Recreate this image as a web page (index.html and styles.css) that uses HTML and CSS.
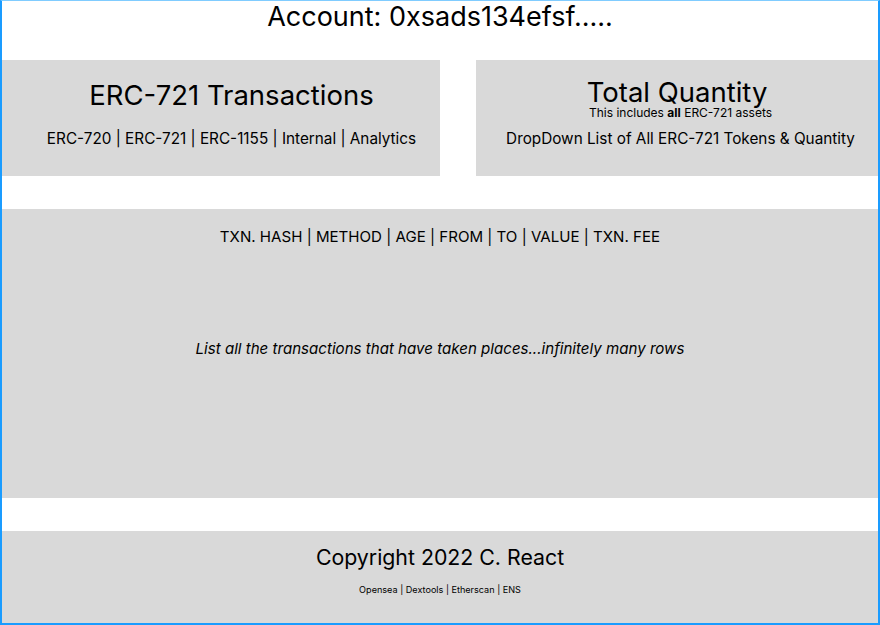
FILE: index.html
```html
<!DOCTYPE html>
<html lang="en">
<head>
<meta charset="utf-8">
<title>Account</title>
<link rel="stylesheet" href="styles.css">
</head>
<body>
<div class="frame">
  <header class="account">Account: 0xsads134efsf.....</header>
  <div class="top-row">
    <section class="card card-left">
      <h1 class="card-title">ERC-721 Transactions</h1>
      <nav class="tabs">ERC-720 | ERC-721 | ERC-1155 | Internal | Analytics</nav>
    </section>
    <section class="card card-right">
      <h2 class="qty-title">Total Quantity</h2>
      <p class="qty-note">This includes <b>all</b> ERC-721 assets</p>
      <p class="qty-list">DropDown List of All ERC-721 Tokens &amp; Quantity</p>
    </section>
  </div>
  <main class="table">
    <div class="table-head">TXN. HASH | METHOD | AGE | FROM | TO | VALUE | TXN. FEE</div>
    <div class="table-body">List all the transactions that have taken places...infinitely many rows</div>
  </main>
  <footer class="footer">
    <div class="copyright">Copyright 2022 C. React</div>
    <div class="links">Opensea | Dextools | Etherscan | ENS</div>
  </footer>
</div>
</body>
</html>
```
FILE: styles.css
```css
* { box-sizing: border-box; margin: 0; padding: 0; }
html, body { background: #fff; }
body {
  font-family: Inter, "Noto Sans", sans-serif;
  color: #000;
}
.frame {
  width: 880px;
  height: 625px;
  border: 2px solid #1a9cff;
  border-top: 1px solid #80ccff;
  display: flex;
  flex-direction: column;
}
.account {
  height: 59px;
  text-align: center;
  font-size: 27px;
  font-weight: 400;
  line-height: 32px;
}
.top-row {
  display: flex;
  gap: 36px;
  height: 116px;
}
.card {
  background: #d9d9d9;
  text-align: center;
}
.card-left {
  width: 438px;
  padding-top: 19px;
  padding-left: 21px;
}
.card-right {
  flex: 1;
  padding-top: 19px;
}
.card-title {
  font-size: 27.5px;
  font-weight: 400;
  line-height: 33px;
}
.tabs {
  font-size: 15.3px;
  line-height: 18px;
  margin-top: 18px;
}
.qty-title {
  font-size: 27.5px;
  font-weight: 400;
  line-height: 26px;
}
.qty-note {
  font-size: 12px;
  line-height: 15px;
  padding-left: 7px;
}
.qty-note b { font-weight: 700; }
.qty-list {
  font-size: 15.3px;
  line-height: 18px;
  margin-top: 10px;
  padding-left: 7px;
}
.table {
  margin-top: 33px;
  height: 289px;
  background: #d9d9d9;
  text-align: center;
  padding-top: 19px;
}
.table-head {
  font-size: 15.1px;
  line-height: 18px;
}
.table-body {
  margin-top: 94px;
  font-size: 15.1px;
  line-height: 18px;
  font-style: italic;
}
.footer {
  margin-top: 33px;
  flex: 1;
  background: #d9d9d9;
  text-align: center;
  padding-top: 13px;
}
.copyright {
  font-size: 21.3px;
  line-height: 27px;
}
.links {
  font-size: 9.1px;
  line-height: 11px;
  margin-top: 13px;
}
```
